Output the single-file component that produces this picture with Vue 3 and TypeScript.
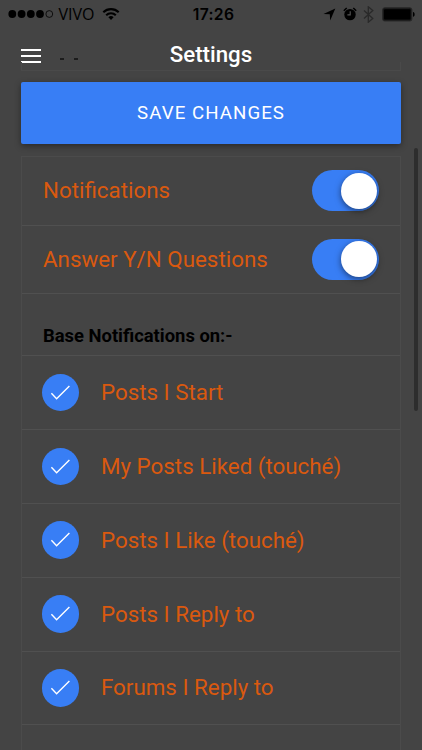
<script setup lang="ts">
import { ref } from 'vue'

interface Option {
  label: string
  on: boolean
}

const toggles = ref<Option[]>([
  { label: 'Notifications', on: true },
  { label: 'Answer Y/N Questions', on: true },
])

const choices = ref<Option[]>([
  { label: 'Posts I Start', on: true },
  { label: 'My Posts Liked (touché)', on: true },
  { label: 'Posts I Like (touché)', on: true },
  { label: 'Posts I Reply to', on: true },
  { label: 'Forums I Reply to', on: true },
])
</script>

<template>
  <div class="screen">
    <div class="status">
      <div class="status-left">
        <svg class="signal" width="46" height="10" viewBox="0 0 46 10">
          <circle cx="4.3" cy="5" r="3.9" />
          <circle cx="13.6" cy="5" r="3.9" />
          <circle cx="22.8" cy="5" r="3.9" />
          <circle cx="32" cy="5" r="3.9" />
          <circle cx="41.3" cy="5" r="3.4" fill="none" stroke="#000" stroke-width="0.8" />
        </svg>
        <span class="carrier">VIVO</span>
        <svg class="wifi" width="18" height="14" viewBox="0 0 18 14">
          <g fill="none" stroke="#000" stroke-width="2.1">
            <path d="M1.3 5.3a10.9 10.9 0 0 1 15.4 0" />
            <path d="M4.2 8.3a6.8 6.8 0 0 1 9.6 0" />
          </g>
          <path d="M9 13l-2.6-2.7a3.7 3.7 0 0 1 5.2 0z" />
        </svg>
      </div>
      <span class="time">17:26</span>
      <div class="status-right">
        <svg width="13" height="13" viewBox="0 0 13 13"><path d="M12.3.6L7.2 12.4 6.8 6.3.5 5.9z" /></svg>
        <svg class="alarm" width="14" height="14" viewBox="0 0 14 14">
          <circle cx="7" cy="7.6" r="5.7" />
          <path d="M.8 3.8L3.7 1M13.2 3.8L10.3 1" stroke="#000" stroke-width="1.5" />
          <path d="M7.2 4.3v3.6H4.4" fill="none" stroke="#555" stroke-width="1.1" />
        </svg>
        <svg class="bluetooth" width="11" height="17" viewBox="0 0 11 17">
          <path d="M1 4.4l8.8 8-4.5 3.8V.8l4.5 3.8-8.8 8" fill="none" stroke="#292929" stroke-width="1.3" />
        </svg>
        <svg class="battery" width="33" height="15" viewBox="0 0 33 15">
          <rect x=".6" y=".8" width="29.3" height="13.2" rx="2" fill="#171717" stroke="#292929" />
          <rect x="2" y="2.3" width="26.5" height="10.2" rx="1" />
          <path d="M31 5c2.2.3 2.2 4.5 0 4.8z" />
        </svg>
      </div>
    </div>

    <header class="nav">
      <button class="menu" aria-label="Menu"><i /><i /><i /></button>
      <h1>Settings</h1>
      <div class="card-tail"><i /><i /></div>
    </header>

    <button class="save">SAVE CHANGES</button>

    <section class="list">
      <label v-for="item in toggles" :key="item.label" class="row toggle-row">
        <span class="label">{{ item.label }}</span>
        <span class="toggle" :class="{ on: item.on }" @click="item.on = !item.on"><i /></span>
      </label>
      <h2>Base Notifications on:-</h2>
      <label v-for="item in choices" :key="item.label" class="row check-row" @click="item.on = !item.on">
        <span class="check">
          <svg v-if="item.on" width="38" height="38" viewBox="0 0 38 38">
            <path d="M9.4 19.2l5.2 5.6L27.4 12.1" fill="none" stroke="#fff" stroke-width="1.4" />
          </svg>
        </span>
        <span class="label">{{ item.label }}</span>
      </label>
      <div class="row check-row" />
    </section>
    <div class="scrollbar" />
  </div>
</template>

<style>
body {
  margin: 0;
  background: #444;
}
</style>

<style scoped>
.screen {
  position: relative;
  box-sizing: border-box;
  width: 422px;
  height: 750px;
  overflow: hidden;
  background: #444;
  font-family: Roboto, "Liberation Sans", sans-serif;
}
svg {
  display: block;
}
button {
  border: 0;
  padding: 0;
  font-family: inherit;
}
.status {
  display: grid;
  grid-template-columns: 1fr auto 1fr;
  align-items: center;
  height: 28px;
  padding: 0 7px 0 8px;
  color: #000;
}
.status-left,
.status-right {
  display: flex;
  align-items: center;
}
.carrier {
  margin-left: 4.5px;
  width: 37.5px;
  padding-bottom: 1px;
  font: 400 16px/18px "Open Sans", sans-serif;
}
.wifi {
  margin-left: 6px;
}
.time {
  padding: 1px 0 0 4px;
  font: 600 15.7px/18px Inter, sans-serif;
  letter-spacing: 0.3px;
}
.status-right {
  justify-content: flex-end;
}
.alarm {
  margin-left: 7px;
}
.bluetooth {
  margin-left: 6px;
}
.battery {
  margin-left: 8px;
}
.nav {
  position: relative;
  display: flex;
  justify-content: center;
  align-items: center;
  height: 54px;
}
.menu {
  position: absolute;
  left: 21px;
  top: 20.5px;
  display: grid;
  gap: 4px;
  width: 20px;
  background: none;
}
.menu i {
  height: 2px;
  background: #fff;
}
h1 {
  margin: 0 0 2px;
  color: #fff;
  font-size: 22.3px;
  font-weight: 500;
  line-height: 28px;
}
.card-tail {
  position: absolute;
  box-sizing: border-box;
  left: 21px;
  top: 34px;
  display: flex;
  gap: 10px;
  width: 380px;
  height: 9px;
  padding-left: 38px;
  border: 1px solid #4a4a4a;
  border-top: 0;
}
.card-tail i {
  width: 4px;
  height: 1.5px;
  margin-top: -4px;
  background: #1c1c1c;
}
.save {
  display: block;
  width: 379.5px;
  height: 62px;
  margin: 0 0 12px 21.3px;
  border-radius: 2px;
  background: #387ef5;
  box-shadow: 0 2px 6px rgba(0, 0, 0, 0.4);
  color: #fff;
  font-size: 18.7px;
  letter-spacing: 1.05px;
}
.list {
  box-sizing: border-box;
  width: 380px;
  margin-left: 21px;
  border: 1px solid #4b4b4b;
}
.row {
  display: flex;
  align-items: center;
  box-sizing: border-box;
  border-bottom: 1px solid #505050;
  color: #da590f;
  font-size: 22.35px;
  line-height: 28px;
}
.label {
  padding-bottom: 1.2px;
}
.toggle-row {
  justify-content: space-between;
  height: 68.5px;
  padding: 0 21px;
}
.toggle {
  display: flex;
  box-sizing: border-box;
  width: 67.5px;
  height: 41px;
  padding: 2.5px;
  border-radius: 21px;
  background: #777;
}
.toggle.on {
  justify-content: flex-end;
  background: #387ef5;
}
.toggle i {
  width: 36px;
  height: 36px;
  border-radius: 50%;
  background: #fff;
  box-shadow: 0 2px 6px rgba(0, 0, 0, 0.5);
}
h2 {
  box-sizing: border-box;
  height: 62px;
  margin: 0;
  padding: 32px 21px 0;
  border-bottom: 1px solid #505050;
  color: #000;
  font-size: 18.4px;
  font-weight: 700;
  line-height: 20px;
}
.check-row {
  height: 73.9px;
  gap: 22px;
  padding-left: 19.5px;
}
.check {
  width: 37.5px;
  height: 37.5px;
  border-radius: 50%;
  background: #387ef5;
}
.scrollbar {
  position: absolute;
  top: 148px;
  right: 4px;
  width: 4px;
  height: 263px;
  border-radius: 2px;
  background: #2d2d2d;
}
</style>
